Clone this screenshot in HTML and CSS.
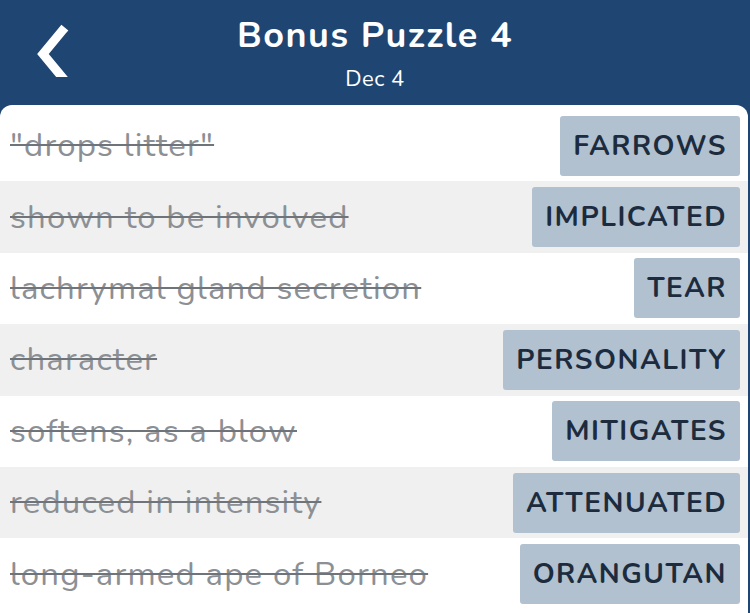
FILE: index.html
```html
<!DOCTYPE html>
<html>
<head>
  <title>Bonus Puzzle 4</title>
  <link rel="stylesheet" href="styles.css">
</head>
<body>
  <div class="header">
    <svg class="back" width="44" height="64" viewBox="0 0 44 64">
      <polyline points="33,18 14,41 33,64" fill="none" stroke="#fff" stroke-width="9" stroke-linecap="square"/>
    </svg>
    <h1>Bonus Puzzle 4</h1>
    <p class="date">Dec 4</p>
  </div>

  <div class="list">
    <div class="row">
      <span class="clue">"drops litter"</span>
      <span class="answer">FARROWS</span>
    </div>
    <div class="row">
      <span class="clue">shown to be involved</span>
      <span class="answer">IMPLICATED</span>
    </div>
    <div class="row">
      <span class="clue">lachrymal gland secretion</span>
      <span class="answer">TEAR</span>
    </div>
    <div class="row">
      <span class="clue">character</span>
      <span class="answer">PERSONALITY</span>
    </div>
    <div class="row">
      <span class="clue">softens, as a blow</span>
      <span class="answer">MITIGATES</span>
    </div>
    <div class="row">
      <span class="clue">reduced in intensity</span>
      <span class="answer">ATTENUATED</span>
    </div>
    <div class="row">
      <span class="clue">long-armed ape of Borneo</span>
      <span class="answer">ORANGUTAN</span>
    </div>
  </div>
</body>
</html>
```

FILE: styles.css
```css
body {
  margin: 0;
  padding: 0;
  background-color: #1f4673;
  font-family: "Nunito", "Open Sans", "Noto Sans", sans-serif;
  height: 613px;
  overflow: hidden;
}

.header {
  position: relative;
  height: 105px;
  text-align: center;
  color: #fff;
}

.back {
  position: absolute;
  left: 29px;
  top: 13px;
}

.header h1 {
  margin: 0;
  padding-top: 13px;
  font-size: 36px;
  font-weight: 700;
  line-height: 46px;
  letter-spacing: 1.5px;
}

.date {
  margin: 0;
  padding-top: 5px;
  font-size: 22px;
  line-height: 30px;
  letter-spacing: 0.5px;
}

.list {
  background-color: #fff;
  margin: 0 2px 0 0;
  border-radius: 12px 12px 0 0;
  padding-top: 5px;
  height: 520px;
}

.row {
  display: flex;
  align-items: center;
  justify-content: space-between;
  height: 71.4px;
  padding: 0 8px 0 10px;
}

.row:nth-child(even) {
  background-color: #f0f0f0;
}

.clue {
  font-size: 33px;
  letter-spacing: 1.15px;
  color: #8c9095;
  text-decoration: line-through;
  text-decoration-thickness: 2px;
  text-decoration-color: #6f747a;
}

.answer {
  background-color: #b1c1cf;
  color: #1c2b3d;
  font-size: 28px;
  font-weight: 700;
  height: 60px;
  line-height: 60px;
  padding: 0 13px;
  border-radius: 3px;
  letter-spacing: 1.5px;
}
```
